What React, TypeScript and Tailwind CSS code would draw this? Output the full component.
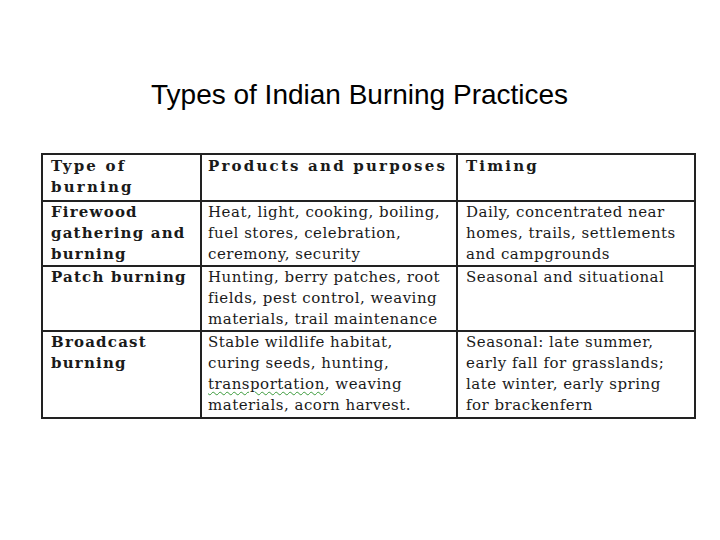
const rows = [
  {
    type: ["Firewood", "gathering and", "burning"],
    products: ["Heat, light, cooking, boiling,", "fuel stores, celebration,", "ceremony, security"],
    timing: ["Daily, concentrated near", "homes, trails, settlements", "and campgrounds"],
    h: "h-[64px]",
  },
  {
    type: ["Patch burning"],
    products: ["Hunting, berry patches, root", "fields, pest control, weaving", "materials, trail maintenance"],
    timing: ["Seasonal and situational"],
    h: "h-[65px]",
  },
  {
    type: ["Broadcast", "burning"],
    products: ["Stable wildlife habitat,", "curing seeds, hunting,", "TRANSPORT", "materials, acorn harvest."],
    timing: ["Seasonal: late summer,", "early fall for grasslands;", "late winter, early spring", "for brackenfern"],
    h: "h-[87px]",
  },
];

const Lines = ({ lines }: { lines: string[] }) => (
  <>
    {lines.map((l) =>
      l === "TRANSPORT" ? (
        <div key={l}>
          <span className="underline decoration-wavy decoration-[#3a9a3a] decoration-1 underline-offset-2">transportation</span>, weaving
        </div>
      ) : (
        <div key={l} className="whitespace-nowrap">{l}</div>
      )
    )}
  </>
);

export default function App() {
  return (
    <div className="w-[720px] h-[540px] bg-white relative font-['Liberation_Sans',sans-serif]">
      <div className="pt-[78px] pl-[151px] text-[28px] leading-[34px] text-black">Types of Indian Burning Practices</div>
      <div className="pt-[41px] pl-[41px]">
        <table className="table-fixed border-collapse border-2 border-[#222] text-[#1a1a1a] font-['DejaVu_Serif',serif] text-[15px] leading-[21px] tracking-[0.5px]">
          <tbody>
            <tr className="h-[47px] align-top font-bold tracking-[2.2px]">
              <td className="w-[159px] border-2 border-[#222] pl-[8px] pt-[1px]">
                <div>Type of</div>
                <div>burning</div>
              </td>
              <td className="w-[256px] border-2 border-[#222] pl-[6px] pt-[1px]">Products and purposes</td>
              <td className="w-[238px] border-2 border-[#222] pl-[8px] pt-[1px]">Timing</td>
            </tr>
            {rows.map((r) => (
              <tr key={r.type[0]} className={`${r.h} align-top`}>
                <td className="border-2 border-[#222] pl-[8px] font-bold tracking-[1.2px]">
                  <Lines lines={r.type} />
                </td>
                <td className="border-2 border-[#222] pl-[6px]">
                  <Lines lines={r.products} />
                </td>
                <td className="border-2 border-[#222] pl-[8px]">
                  <Lines lines={r.timing} />
                </td>
              </tr>
            ))}
          </tbody>
        </table>
      </div>
    </div>
  );
}
